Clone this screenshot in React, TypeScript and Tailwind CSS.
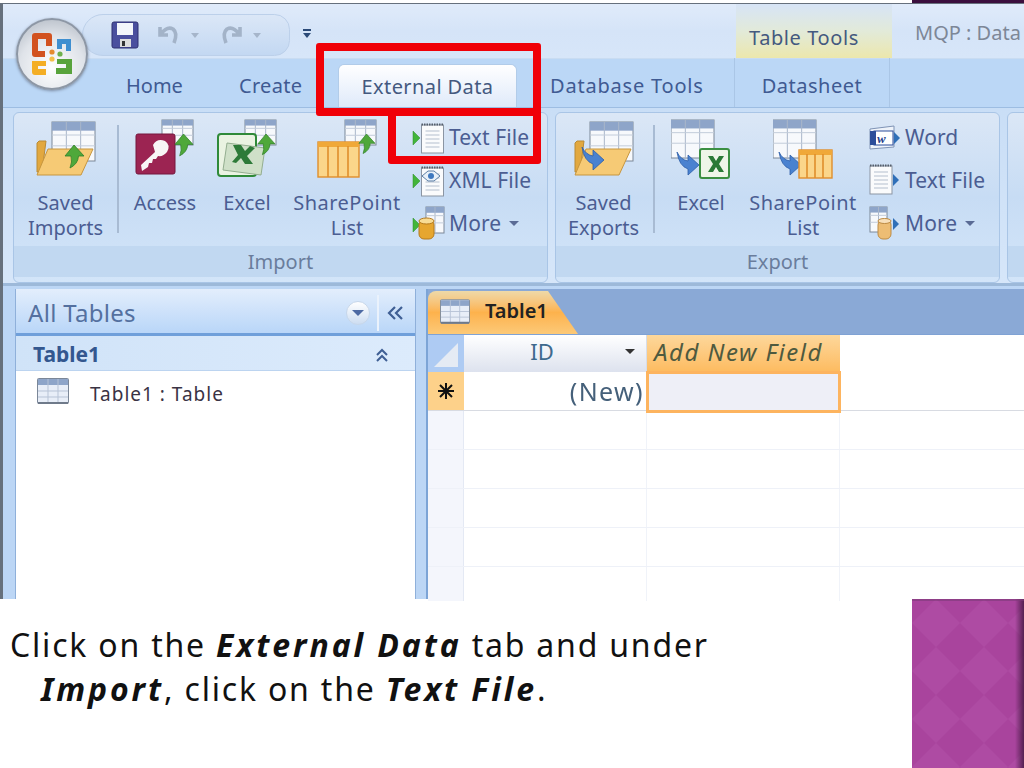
const ribbonText = "text-[#4b5d92]";

// small table glyph used by most of the ribbon icons
function Grid({ x, y, w, h, cols = 3, rows = 3 }: { x: number; y: number; w: number; h: number; cols?: number; rows?: number }) {
  const cw = w / cols;
  const hh = h / (rows + 0.6);
  return (
    <g>
      <rect x={x} y={y} width={w} height={h} fill="#f7f9fc" stroke="#7b8798" />
      <rect x={x} y={y} width={w} height={hh * 0.8} fill="#8ea5c9" />
      {Array.from({ length: cols - 1 }).map((_, i) => (
        <line key={i} x1={x + cw * (i + 1)} y1={y} x2={x + cw * (i + 1)} y2={y + h} stroke="#a9b6c9" />
      ))}
      {Array.from({ length: rows - 1 }).map((_, i) => (
        <line key={i} x1={x} y1={y + hh * (i + 1.2)} x2={x + w} y2={y + hh * (i + 1.2)} stroke="#c2ccda" />
      ))}
    </g>
  );
}

function UpArrow({ x, y, s = 1 }: { x: number; y: number; s?: number }) {
  return (
    <path
      transform={`translate(${x} ${y}) scale(${s})`}
      d="M10 0 L20 11 L14.5 11 Q14 19 6 23 Q8.5 17 7 11 L1 11 Z"
      fill="#4fa83a"
      stroke="#2f7f2a"
      strokeWidth="0.8"
    />
  );
}

function BlueArrow({ x, y }: { x: number; y: number }) {
  return (
    <path
      transform={`translate(${x} ${y})`}
      d="M0 0 Q4 8 11 9 L11 3 L22 13 L11 23 L11 17 Q2 14 0 0 Z"
      fill="#4a82d0"
      stroke="#2d5ea8"
      strokeWidth="0.8"
    />
  );
}

function SavedImportsIcon() {
  return (
    <svg width="60" height="60" viewBox="0 0 60 60">
      <Grid x={16} y={3} w={43} h={39} />
      <path d="M1 24 L1 53 L6 53 L10 22 L3 22 Z" fill="#e2a83f" stroke="#b98a35" />
      <path d="M12 30 L57 30 L45 56 L1 56 Z" fill="#f6ca75" stroke="#c7963f" />
      <UpArrow x={28} y={26} />
    </svg>
  );
}

function AccessIcon() {
  return (
    <svg width="60" height="60" viewBox="0 0 60 60">
      <Grid x={27} y={1} w={31} h={25} />
      <rect x={1} y={15} width={39} height={40} rx={2} fill="#9c2452" stroke="#74173c" />
      <path d="M7 52 L6 46 L20 33 L18 26 Q22 19 30 22 Q36 26 32 33 Q28 38 23 37 L21 40 L18 40 L17 44 L14 44 L13 48 Z" fill="#f8f5f5" />
      <UpArrow x={39} y={15} s={0.95} />
    </svg>
  );
}

function ExcelIcon() {
  return (
    <svg width="60" height="60" viewBox="0 0 60 60">
      <Grid x={28} y={1} w={31} h={25} />
      <rect x={1} y={15} width={38} height={42} rx={3} fill="#eaf3e2" stroke="#2f8a39" strokeWidth="2" />
      <path d="M10 24 L48 29 L44 56 L6 51 Z" fill="#cfe0c8" stroke="#93ad8f" />
      <path d="M16 26 L24 26 L28 32 L33 27 L38 29 L30 37 L36 45 L28 45 L24 39 L19 44 L15 43 L21 36 Z" fill="#2d7a38" />
      <UpArrow x={40} y={15} s={0.9} />
    </svg>
  );
}

function SharePointImportIcon() {
  return (
    <svg width="60" height="60" viewBox="0 0 60 60">
      <Grid x={28} y={1} w={31} h={25} />
      <rect x={1} y={23} width={41} height={35} fill="#fbd68a" stroke="#e08e2b" strokeWidth="1.4" />
      <rect x={1} y={23} width={41} height={5} fill="#f0a838" />
      {[11, 21, 31].map((x) => (
        <line key={x} x1={x} y1={27} x2={x} y2={58} stroke="#e08e2b" strokeWidth="1.6" />
      ))}
      <UpArrow x={41} y={15} s={0.85} />
    </svg>
  );
}

function SavedExportsIcon() {
  return (
    <svg width="60" height="60" viewBox="0 0 60 60">
      <Grid x={16} y={3} w={43} h={39} />
      <path d="M1 24 L1 53 L6 53 L10 22 L3 22 Z" fill="#e2a83f" stroke="#b98a35" />
      <path d="M12 30 L57 30 L45 56 L1 56 Z" fill="#f6ca75" stroke="#c7963f" />
      <BlueArrow x={8} y={28} />
    </svg>
  );
}

function ExcelExportIcon() {
  return (
    <svg width="60" height="60" viewBox="0 0 60 60">
      <Grid x={0} y={1} w={43} h={38} />
      <BlueArrow x={6} y={33} />
      <rect x={29} y={30} width={29} height={29} rx={2} fill="#eef5e8" stroke="#3b8f42" strokeWidth="2" />
      <path d="M37 37 L42 37 L45 42 L48 37 L53 37 L48 45 L53 53 L48 53 L45 48 L42 53 L37 53 L42 45 Z" fill="#2a7a36" />
    </svg>
  );
}

function SharePointExportIcon() {
  return (
    <svg width="60" height="60" viewBox="0 0 60 60">
      <Grid x={0} y={1} w={43} h={38} />
      <BlueArrow x={6} y={33} />
      <rect x={26} y={31} width={33} height={28} fill="#fbd68a" stroke="#e08e2b" strokeWidth="1.4" />
      <rect x={26} y={31} width={33} height={5} fill="#f0a838" />
      {[34, 42, 50].map((x) => (
        <line key={x} x1={x} y1={35} x2={x} y2={59} stroke="#e08e2b" strokeWidth="1.6" />
      ))}
    </svg>
  );
}

function Notepad({ x, y }: { x: number; y: number }) {
  return (
    <g transform={`translate(${x} ${y})`}>
      <rect x={0} y={2} width={22} height={28} fill="#fafbfc" stroke="#8b95a3" />
      <path d="M0 1.5 H22" stroke="#555e6b" strokeWidth="2" strokeDasharray="1.5 1" />
      {[8, 12, 16, 20, 24].map((l) => (
        <line key={l} x1={4} y1={l} x2={18} y2={l} stroke="#b4bfce" />
      ))}
    </g>
  );
}

function GreenTip({ y }: { y: number }) {
  return <path d={`M1 ${y} L8 ${y + 7} L1 ${y + 14} Z`} fill="#42b53a" stroke="#2d8a2a" strokeWidth="0.5" />;
}

function BlueTip({ x, y }: { x: number; y: number }) {
  return <path d={`M${x} ${y} L${x + 6} ${y + 6} L${x} ${y + 12} Z`} fill="#2f6fb8" />;
}

function TextFileImport() {
  return (
    <svg width="34" height="32" viewBox="0 0 34 32">
      <GreenTip y={9} />
      <Notepad x={9.5} y={1} />
    </svg>
  );
}

function XmlFileImport() {
  return (
    <svg width="34" height="32" viewBox="0 0 34 32">
      <GreenTip y={9} />
      <Notepad x={9.5} y={1} />
      <path d="M10 11 L16 6 L22 6 L28 11 L22 16 L16 16 Z" fill="#e8f0f8" stroke="#5c7fa6" />
      <circle cx={19} cy={11} r={3} fill="#3f79bf" />
    </svg>
  );
}

function MoreImport() {
  return (
    <svg width="34" height="36" viewBox="0 0 34 36">
      <GreenTip y={12} />
      <Grid x={14} y={1} w={18} h={26} cols={2} rows={3} />
      <rect x={7} y={14} width={15} height={19} rx={5} fill="#e6a62f" stroke="#b57a1d" />
      <ellipse cx={14.5} cy={15} rx={7.5} ry={3} fill="#f8dc94" stroke="#b57a1d" />
    </svg>
  );
}

function WordExport() {
  return (
    <svg width="34" height="30" viewBox="0 0 34 30">
      <path d="M2 6 L26 3 L26 24 L2 26 Z" fill="#eef3fa" stroke="#7f93b5" />
      <rect x={6} y={8} width={19} height={14} fill="#fff" stroke="#2b4d9a" />
      <rect x={2} y={8} width={6} height={14} fill="#2b4d9a" />
      <text x={9} y={20} fontSize={13} fontStyle="italic" fontWeight={700} fontFamily="Liberation Serif, serif" fill="#24408c">w</text>
      <BlueTip x={26} y={9} />
    </svg>
  );
}

function TextFileExport() {
  return (
    <svg width="34" height="36" viewBox="0 0 34 36">
      <Notepad x={2} y={1} />
      <BlueTip x={25} y={11} />
    </svg>
  );
}

function MoreExport() {
  return (
    <svg width="34" height="36" viewBox="0 0 34 36">
      <Grid x={2} y={1} w={17} h={25} cols={2} rows={3} />
      <rect x={10} y={14} width={13} height={19} rx={5} fill="#edbd74" stroke="#bd8b44" />
      <ellipse cx={16.5} cy={15} rx={6.5} ry={2.5} fill="#f8e0ba" stroke="#bd8b44" />
      <BlueTip x={25} y={12} />
    </svg>
  );
}

function SheetGlyph({ w, h }: { w: number; h: number }) {
  return (
    <svg width={w} height={h} viewBox="0 0 32 26">
      <rect x={0.5} y={0.5} width={31} height={25} rx={1} fill="#e8eef8" stroke="#7b8798" />
      <rect x={1} y={1} width={30} height={6} fill="#8ea5c9" />
      <path d="M11 1 V25 M21 1 V25 M1 13 H31 M1 19 H31" stroke="#b7c3d6" />
      <path d="M1 25 H31" stroke="#6f7a8a" strokeWidth="2" />
    </svg>
  );
}

function BigButton({ width, icon, label, second, wide }: { width: string; icon: React.ReactNode; label: string; second?: string; wide?: boolean }) {
  return (
    <div className={`${width} flex shrink-0 flex-col items-center`}>
      <div className="flex h-[71px] items-start">{icon}</div>
      <span className={`text-[20px] leading-[25px] whitespace-nowrap ${wide ? "tracking-[0.5px]" : ""} ${ribbonText}`}>{label}</span>
      {second && <span className={`text-[20px] leading-[25px] whitespace-nowrap ${ribbonText}`}>{second}</span>}
    </div>
  );
}

function SmallRow({ icon, label, caret }: { icon: React.ReactNode; label: string; caret?: boolean }) {
  return (
    <div className="flex h-[43px] items-center">
      <div className="flex w-[37px] shrink-0 justify-start">{icon}</div>
      <span className={`text-[21px] leading-none tracking-[0.1px] whitespace-nowrap ${ribbonText}`}>{label}</span>
      {caret && <span className="ml-[8px] h-0 w-0 border-x-[5px] border-t-[5px] border-x-transparent border-t-[#5a6b95]" />}
    </div>
  );
}

function RibbonGroup({ width, label, children }: { width: string; label: string; children: React.ReactNode }) {
  return (
    <div className={`${width} flex shrink-0 flex-col overflow-hidden rounded-[6px] border border-[#a9c5e6] bg-gradient-to-b from-[#dbe7f6] via-[#c7dcf4] to-[#d3e5f9]`}>
      <div className="flex h-[133px]">{children}</div>
      <div className="flex h-[31px] items-center justify-center bg-[#c1d8f1] text-[20px] text-[#6a7d9c]">{label}</div>
    </div>
  );
}

function GridRow({ last }: { last?: boolean }) {
  return (
    <div className={`flex shrink-0 ${last ? "h-[34px]" : "h-[39px] border-b border-[#eef1f8]"}`}>
      <div className="w-[36px] shrink-0 border-r border-[#e4e9f4] bg-[#f4f6fc]" />
      <div className="w-[183px] shrink-0 border-r border-[#f0f3f9]" />
      <div className="w-[193px] shrink-0 border-r border-[#f0f3f9]" />
      <div className="flex-1" />
    </div>
  );
}

export default function App() {
  return (
    <div className="relative h-[768px] w-[1024px] overflow-hidden bg-white font-['Noto_Sans',sans-serif]">
      {/* sliver of the slide background */}
      <div className="flex h-[3px] justify-end">
        <div className="w-[112px] bg-[#3b0f3d]" />
      </div>

      {/* Access window */}
      <div className="relative flex h-[596px] flex-col border-t border-l-[3px] border-[#66707c] bg-[#bfd8f5] blur-[0.7px]">
        {/* title bar */}
        <div className="flex h-[54px] shrink-0 items-start bg-gradient-to-b from-[#e0ebfa] via-[#d5e4f8] to-[#d7e6f9]">
          <div className="mt-[10px] ml-[79px] flex h-[42px] w-[208px] items-center rounded-r-[22px] rounded-l-[30px] border border-[#bcd0ea] bg-gradient-to-b from-[#dbe7f7] to-[#c3d8f2] pl-[28px]">
            <svg width="28" height="28" viewBox="0 0 28 28">
              <rect x={1} y={1} width={26} height={26} rx={2} fill="#4a4f9e" stroke="#2e3170" />
              <rect x={6} y={2} width={16} height={12} fill="#f3f6fb" />
              <rect x={9} y={18} width={11} height={8} fill="#ddd" />
              <rect x={11} y={20} width={3} height={5} fill="#333" />
            </svg>
            <svg className="ml-[18px]" width="24" height="24" viewBox="0 0 24 24" fill="none" stroke="#a3b3c8" strokeWidth="3.6">
              <path d="M3 4 V12 H11 M4 11 Q10 3 16 6 Q21 10 17 20" />
            </svg>
            <span className="ml-[10px] h-0 w-0 border-x-[4px] border-t-[5px] border-x-transparent border-t-[#a6b5ca]" />
            <svg className="ml-[20px]" width="24" height="24" viewBox="0 0 24 24" fill="none" stroke="#a3b3c8" strokeWidth="3.6">
              <path d="M21 4 V12 H13 M20 11 Q14 3 8 6 Q3 10 7 20" />
            </svg>
            <span className="ml-[10px] h-0 w-0 border-x-[4px] border-t-[5px] border-x-transparent border-t-[#a6b5ca]" />
          </div>
          <div className="mt-[25px] ml-[12px] flex w-[10px] flex-col items-center">
            <div className="h-[2px] w-[8px] bg-[#2b4a78]" />
            <div className="mt-[2px] h-0 w-0 border-x-[4px] border-t-[5px] border-x-transparent border-t-[#2b4a78]" />
          </div>
          <div className="ml-[424px] flex h-[54px] w-[156px] shrink-0 items-start justify-center bg-gradient-to-b from-[#d7e4f6] via-[#e2ead9] to-[#ece7ac] pt-[20px] pr-[20px] text-[20px] leading-[27px] tracking-[0.6px] text-[#44597f]">
            Table Tools
          </div>
          <span className="mt-[15px] ml-[23px] text-[20px] leading-[27px] whitespace-nowrap text-[#7d8797]">MQP : Data</span>
        </div>

        {/* tabs */}
        <div className="flex h-[49px] shrink-0 items-end border-t border-[#c9dcf2] bg-[#bbd7f6] text-[20px] text-[#3f5a92]">
          <span className="mb-[6px] ml-[123px] w-[113px]">Home</span>
          <span className="mb-[6px] w-[99px] tracking-[0.3px]">Create</span>
          <div className="flex h-[43px] w-[179px] items-center justify-center rounded-t-[6px] border border-b-0 border-[#b2cce9] bg-gradient-to-b from-white to-[#dfeafa] pt-[2px] tracking-[0.4px] text-[#44597f]">
            External Data
          </div>
          <span className="mb-[6px] ml-[33px] w-[184px] tracking-[0.8px] whitespace-nowrap">Database Tools</span>
          <div className="flex h-[49px] w-[156px] items-end justify-center border-x border-[#aac6e6] pb-[6px] tracking-[0.5px]">Datasheet</div>
        </div>

        {/* ribbon */}
        <div className="flex h-[176px] shrink-0 gap-[7px] border-t border-[#9dbde2] bg-gradient-to-b from-[#c9def6] to-[#d6e6f9] pt-[4px] pl-[10px]">
          <RibbonGroup width="w-[535px]" label="Import">
            <div className="flex w-full pt-[6px]">
              <BigButton width="w-[103px]" icon={<SavedImportsIcon />} label="Saved" second="Imports" />
              <div className="mt-[6px] h-[108px] w-[2px] shrink-0 bg-[#a8bbd3]" />
              <BigButton width="w-[92px]" icon={<AccessIcon />} label="Access" />
              <BigButton width="w-[72px]" icon={<ExcelIcon />} label="Excel" />
              <BigButton width="w-[128px]" icon={<SharePointImportIcon />} label="SharePoint" second="List" wide />
              <div className="-mt-[3px] ml-[1px] flex flex-col">
                <SmallRow icon={<TextFileImport />} label="Text File" />
                <SmallRow icon={<XmlFileImport />} label="XML File" />
                <SmallRow icon={<MoreImport />} label="More" caret />
              </div>
            </div>
          </RibbonGroup>
          <RibbonGroup width="w-[445px]" label="Export">
            <div className="flex w-full pt-[6px]">
              <BigButton width="w-[95px]" icon={<SavedExportsIcon />} label="Saved" second="Exports" />
              <div className="mt-[6px] ml-[2px] h-[108px] w-[2px] shrink-0 bg-[#a8bbd3]" />
              <BigButton width="w-[92px]" icon={<ExcelExportIcon />} label="Excel" />
              <BigButton width="w-[112px]" icon={<SharePointExportIcon />} label="SharePoint" second="List" wide />
              <div className="-mt-[3px] ml-[9px] flex flex-col">
                <SmallRow icon={<WordExport />} label="Word" />
                <SmallRow icon={<TextFileExport />} label="Text File" />
                <SmallRow icon={<MoreExport />} label="More" caret />
              </div>
            </div>
          </RibbonGroup>
          <RibbonGroup width="w-[40px]" label="">
            <div />
          </RibbonGroup>
        </div>

        {/* nav pane + document */}
        <div className="flex min-h-0 flex-1 border-t-[3px] border-[#9db9d9] bg-[#bcd6f5] pt-[3px] pl-[12px]">
          <div className="flex w-[401px] shrink-0 flex-col border-x border-[#8fb0da] bg-white">
            <div className="flex h-[47px] shrink-0 items-center border-b-[3px] border-[#6f9fda] bg-gradient-to-b from-[#e3eefc] to-[#b9d6f8] pt-[3px] pl-[12px]">
              <span className="text-[24px] tracking-[0.3px] text-[#54709f]">All Tables</span>
              <div className="ml-auto flex h-[24px] w-[24px] items-center justify-center rounded-full border border-[#c7d7ea] bg-gradient-to-b from-white to-[#cdddf1]">
                <div className="h-0 w-0 border-x-[6px] border-t-[6px] border-x-transparent border-t-[#4e6aa3]" />
              </div>
              <div className="mx-[7px] h-[36px] w-[2px] bg-[#eaf2fc]" />
              <svg className="mr-[11px]" width="18" height="16" viewBox="0 0 18 16" fill="none" stroke="#3f5f94" strokeWidth="2.2">
                <path d="M9 2 L3 8 L9 14 M16 2 L10 8 L16 14" />
              </svg>
            </div>
            <div className="flex h-[35px] shrink-0 items-center justify-between border-b border-[#bcd4f0] bg-gradient-to-r from-[#d0e3f8] to-[#dcebfc] pt-[4px] pr-[26px] pl-[17px]">
              <span className="text-[21px] font-bold text-[#33578f]">Table1</span>
              <svg width="14" height="16" viewBox="0 0 14 16" fill="none" stroke="#3f5f94" strokeWidth="2">
                <path d="M2 8 L7 3 L12 8 M2 14 L7 9 L12 14" />
              </svg>
            </div>
            <div className="flex items-start pt-[7px] pl-[21px]">
              <SheetGlyph w={32} h={26} />
              <span className="mt-[2px] ml-[21px] text-[19px] tracking-[1px] text-[#3a3344]">Table1 : Table</span>
            </div>
          </div>

          <div className="ml-[10px] flex min-w-0 flex-1 flex-col border-l-2 border-[#7ca4d6] bg-white">
            <div className="flex h-[45px] shrink-0 items-end bg-[#8aa9d6] pt-[2px]">
              <div className="flex h-[43px] w-[150px] items-center rounded-tl-[8px] bg-gradient-to-b from-[#eed9a8] via-[#fdb24c] to-[#fcc977] pb-[3px] pl-[12px] [clip-path:polygon(0_0,80%_0,100%_100%,0_100%)]">
                <SheetGlyph w={30} h={25} />
                <span className="ml-[15px] text-[20px] font-semibold text-[#222]">Table1</span>
              </div>
            </div>
            <div className="flex h-[38px] shrink-0 border-t border-[#7fa2d4]">
              <div className="flex w-[36px] shrink-0 items-end justify-center bg-[#aecbf3] pb-[5px]">
                <div className="h-0 w-0 border-b-[24px] border-l-[24px] border-b-[#e5ebf4] border-l-transparent" />
              </div>
              <div className="relative flex w-[183px] shrink-0 items-center justify-center border-r border-[#d7dde8] bg-gradient-to-b from-white to-[#dde2ee] pr-[26px] pb-[4px] text-[22px] text-[#3e6a8e]">
                ID
                <div className="absolute right-[11px] h-0 w-0 border-x-[5px] border-t-[5px] border-x-transparent border-t-[#333]" />
              </div>
              <div className="flex w-[193px] shrink-0 items-center bg-gradient-to-b from-[#fdd79a] to-[#fdbb5f] pb-[4px] pl-[7px] text-[24px] tracking-[1.5px] whitespace-nowrap text-[#4f5a3f] italic">
                Add New Field
              </div>
            </div>
            <div className="flex h-[39px] shrink-0 border-b border-[#d8dbe2]">
              <div className="flex w-[36px] shrink-0 items-center justify-center bg-[#fdd18a]">
                <svg width="20" height="20" viewBox="0 0 20 20" stroke="#111" strokeWidth="2">
                  <path d="M10 2 V18 M2 10 H18 M4 4 L16 16 M16 4 L4 16" />
                </svg>
              </div>
              <div className="flex w-[183px] shrink-0 items-center justify-end pt-[2px] pr-[3px] text-[25px] tracking-[1.4px] text-[#45607a]">(New)</div>
              <div className="z-10 -mx-[1px] -mt-[1px] -mb-[2px] h-[42px] w-[195px] shrink-0 border-[3px] border-[#fdb45f] bg-[#eeeff7]" />
            </div>
            <GridRow />
            <GridRow />
            <GridRow />
            <GridRow />
            <GridRow last />
          </div>
        </div>

        {/* office button */}
        <div className="absolute top-[14px] left-[13px] flex h-[72px] w-[72px] items-center justify-center rounded-full border-2 border-[#8d97a5] bg-[radial-gradient(circle_at_50%_70%,#ffffff,#dfe3e9_55%,#aab2bd)] shadow-[0_1px_3px_#7b8aa0]">
          <svg width="44" height="44" viewBox="0 0 44 44">
            <path d="M2 4 Q2 1 5 1 H19 Q22 1 22 4 V14 H16 V7 H8 V19 H15 V25 H5 Q2 25 2 22 Z" fill="#d2521f" />
            <path d="M27 7 H41 V19 H36 V12 H32 V17 H27 Z" fill="#3f8fd0" />
            <path d="M2 29 H16 V34 H8 V37 H16 V43 H5 Q2 43 2 40 Z" fill="#f4ae25" />
            <path d="M27 27 H42 V42 H26 V36 H36 V32 H27 Z" fill="#58a33c" />
            <circle cx={22} cy={20} r={2.6} fill="#e58a2e" />
            <circle cx={22} cy={27} r={2.6} fill="#f5c04a" />
            <circle cx={30} cy={22} r={2.6} fill="#6fb04d" />
          </svg>
        </div>
      </div>

      {/* caption + corner block */}
      <div className="flex h-[169px]">
        <p className="w-[912px] shrink-0 pt-[24px] pl-[10px] text-[32px] leading-[44px] tracking-[1.8px] whitespace-nowrap text-[#111]">
          Click on the <b className="tracking-[2.9px] italic">External Data</b> tab and under
          <br />
          <span className="ml-[31px]">
            <b className="tracking-[2.9px] italic">Import</b>, click on the <b className="tracking-[2.9px] italic">Text File</b>.
          </span>
        </p>
        <div className="flex-1">
          <svg width="112" height="169" viewBox="0 0 112 169">
            <defs>
              <pattern id="diamonds" width="48" height="48" patternUnits="userSpaceOnUse">
                <rect width="48" height="48" fill="#a9449d" />
                <path d="M24 0 L48 24 L24 48 L0 24 Z" fill="#ae4ba3" />
              </pattern>
              <linearGradient id="edge" x1="0" x2="1" y1="0" y2="0">
                <stop offset="0" stopColor="#4a1c48" stopOpacity="0" />
                <stop offset="1" stopColor="#4a1c48" stopOpacity="0.9" />
              </linearGradient>
            </defs>
            <rect width="112" height="169" fill="url(#diamonds)" />
            <rect x="103" width="9" height="169" fill="url(#edge)" />
            <rect width="112" height="2" fill="#7d3a78" opacity="0.6" />
          </svg>
        </div>
      </div>

      {/* red highlight boxes */}
      <div className="absolute top-[43px] left-[316px] h-[73px] w-[225px] rounded-[3px] border-[8px] border-[#f00008]" />
      <div className="absolute top-[108px] left-[388px] h-[56px] w-[153px] rounded-[3px] border-[8px] border-[#f00008]" />
    </div>
  );
}
